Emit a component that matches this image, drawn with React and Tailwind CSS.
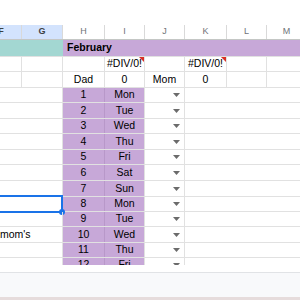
import React from 'react';

const W = [41, 41, 42, 40, 40, 42, 40, 40];
const LETTERS = ['F', 'G', 'H', 'I', 'J', 'K', 'L', 'M'];
const DAYS = [
  ['1', 'Mon', 15], ['2', 'Tue', 16], ['3', 'Wed', 15], ['4', 'Thu', 16],
  ['5', 'Fri', 15], ['6', 'Sat', 16], ['7', 'Sun', 16], ['8', 'Mon', 15],
  ['9', 'Tue', 15], ['10', 'Wed', 16], ['11', 'Thu', 15], ['12', 'Fri', 15],
];

function Arrow() {
  return (
    <svg width="7" height="4" viewBox="0 0 7 4" className="absolute right-[4px] top-1/2 -translate-y-1/2">
      <path d="M0 0 L7 0 L3.5 4 Z" fill="#6b6b6b" />
    </svg>
  );
}

function ErrFlag() {
  return <span className="absolute right-0 top-0 w-0 h-0 border-l-[5px] border-l-transparent border-t-[5px] border-t-[#d93025]" />;
}

export default function App() {
  return (
    <div className="w-[300px] h-[300px] overflow-hidden bg-white relative text-[10.5px] text-black" style={{ fontFamily: '"Liberation Sans", Arial, sans-serif' }}>
      <div className="h-[25px] bg-white" />
      <div className="h-[240px] overflow-hidden">
        <div className="-ml-[19px] w-[330px]">
          {/* column headers */}
          <div className="flex h-[15px] border-b border-[#c4c7c5]">
            {LETTERS.map((l, i) => (
              <div key={l} style={{ width: W[i] }} className={`shrink-0 flex items-center justify-center text-[9px] border-r border-[#d9d9d9] ${i < 2 ? 'bg-[#d3e3fd] text-[#3c4043] font-bold' : 'text-[#6f7378]'}`}>{l}</div>
            ))}
          </div>
          {/* February */}
          <div className="flex h-[17px] border-b border-[#e1e1e1]">
            <div className="w-[82px] shrink-0 bg-[#a3d7d2]" />
            <div className="flex-1 bg-[#c7a8d8] pl-[4px] flex items-center font-bold text-[10.5px]">February</div>
          </div>
          {/* DIV row */}
          <div className="flex h-[15px] border-b border-[#e1e1e1]">
            {W.map((w, i) => (
              <div key={i} style={{ width: w }} className="shrink-0 relative border-r border-[#e1e1e1] flex items-center justify-center whitespace-nowrap">
                {(i === 3 || i === 5) && <><span>#DIV/0!</span><ErrFlag /></>}
              </div>
            ))}
          </div>
          {/* Dad row */}
          <div className="flex h-[16px] border-b border-[#e1e1e1]">
            {['', '', 'Dad', '0', 'Mom', '0', '', ''].map((t, i) => (
              <div key={i} style={{ width: W[i] }} className="shrink-0 border-r border-[#e1e1e1] flex items-center justify-center">{t}</div>
            ))}
          </div>
          {/* day rows */}
          {DAYS.map(([n, d, h], r) => (
            <div key={r} style={{ height: h }} className="flex border-b border-[#e1e1e1]">
              <div className="w-[82px] shrink-0 relative border-r border-[#e1e1e1] flex items-center">
                {r === 9 && <span className="pl-[19px]">mom's</span>}
                {r === 7 && (
                  <div className="absolute -left-[2px] -top-[2px] right-[-1px] bottom-[-2px] border-2 border-[#1a73e8]">
                    <span className="absolute -right-[4px] -bottom-[4px] w-[6px] h-[6px] rounded-full bg-[#1a73e8]" />
                  </div>
                )}
              </div>
              <div className="w-[42px] shrink-0 bg-[#c7a8d8] border-r border-[#b898c9] flex items-center justify-center">{n}</div>
              <div className="w-[40px] shrink-0 bg-[#c7a8d8] border-r border-[#e1e1e1] flex items-center justify-center">{d}</div>
              <div className="w-[40px] shrink-0 relative border-r border-[#e1e1e1]"><Arrow /></div>
              <div className="flex-1" />
            </div>
          ))}
        </div>
      </div>
      <div className="h-[7px] bg-white" />
      <div className="h-[25px] border-t border-[#e1e3e6] bg-[#f8f9fb]" />
      <div className="h-[3px] bg-[#e6dcdc]" />
    </div>
  );
}
